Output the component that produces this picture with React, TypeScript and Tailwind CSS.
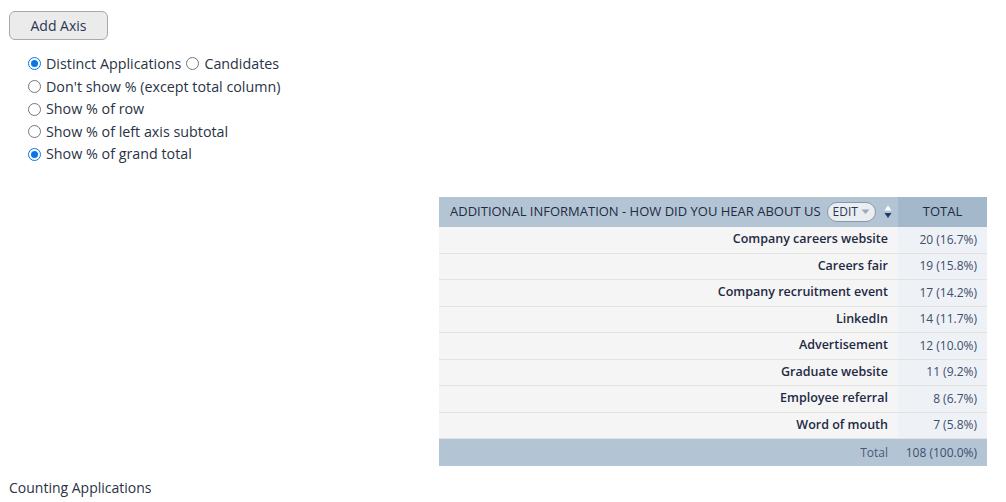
import React from "react";

const rows: [string, string][] = [
  ["Company careers website", "20 (16.7%)"],
  ["Careers fair", "19 (15.8%)"],
  ["Company recruitment event", "17 (14.2%)"],
  ["LinkedIn", "14 (11.7%)"],
  ["Advertisement", "12 (10.0%)"],
  ["Graduate website", "11 (9.2%)"],
  ["Employee referral", "8 (6.7%)"],
  ["Word of mouth", "7 (5.8%)"],
];

function Radio({ checked }: { checked?: boolean }) {
  return checked ? (
    <span className="inline-flex w-[13px] h-[13px] rounded-full border border-[#0a75e6] bg-white items-center justify-center shrink-0">
      <span className="w-[7px] h-[7px] rounded-full bg-[#0a75e6]" />
    </span>
  ) : (
    <span className="inline-block w-[13px] h-[13px] rounded-full border border-[#767676] bg-white shrink-0" />
  );
}

export default function App() {
  return (
    <div className="w-[1006px] h-[502px] bg-white text-[#1f2a44] font-['Open_Sans',sans-serif] text-[14px] relative">
      <div className="pt-[11px] pl-[9px]">
        <button className="w-[99px] h-[29px] rounded-[6px] border border-[#a9a9a9] bg-[#ebebeb] text-[14px] text-[#2a3754]">
          Add Axis
        </button>
      </div>
      <div className="pl-[28px] pt-[12px] flex flex-col text-[14.3px] text-[#2a3346]">
        <div className="h-[23px] flex items-center gap-[5px]">
          <Radio checked />
          <span>Distinct Applications</span>
          <Radio />
          <span>Candidates</span>
        </div>
        <div className="h-[23px] flex items-center gap-[5px]">
          <Radio />
          <span>Don't show % (except total column)</span>
        </div>
        <div className="h-[22px] flex items-center gap-[5px]">
          <Radio />
          <span>Show % of row</span>
        </div>
        <div className="h-[23px] flex items-center gap-[5px]">
          <Radio />
          <span>Show % of left axis subtotal</span>
        </div>
        <div className="h-[22px] flex items-center gap-[5px]">
          <Radio checked />
          <span>Show % of grand total</span>
        </div>
      </div>

      <div className="ml-[439px] mt-[32px] w-[548px] flex flex-col">
        <div className="flex h-[30px]">
          <div className="w-[459px] bg-[#b3c5d4] flex items-center pl-[11px] text-[13px] text-[#1f2a44]">
            <span>ADDITIONAL INFORMATION - HOW DID YOU HEAR ABOUT US</span>
            <span className="ml-[6px] h-[20px] px-[5px] rounded-full border border-[#8a96a6] bg-[#e9eef3] flex items-center gap-[3px] text-[12px] text-[#2a3754]">
              EDIT
              <svg width="9" height="6" viewBox="0 0 9 6"><path d="M0.5 0.5 L8.5 0.5 L4.5 5 Z" fill="#a0a8b4" /></svg>
            </span>
            <svg className="ml-[8px]" width="8" height="14" viewBox="0 0 8 14">
              <path d="M4 0.5 L7.5 5.5 L0.5 5.5 Z" fill="#ffffff" />
              <path d="M0.5 8 L7.5 8 L4 13 Z" fill="#1f3a66" />
            </svg>
          </div>
          <div className="flex-1 bg-[#a4b8cb] flex items-center justify-center text-[13px] text-[#1f2a44]">
            TOTAL
          </div>
        </div>
        {rows.map(([label, value]) => (
          <div key={label} className="flex h-[26.5px] border-b border-[#e2e2e2]">
            <div className="w-[459px] bg-[#f5f5f5] flex items-center justify-end pr-[10px] text-[12.5px] font-semibold text-[#1f2a44]">
              {label}
            </div>
            <div className="flex-1 bg-[#eef1f5] flex items-center justify-end pr-[10px] text-[12px] text-[#3d4e6e]">
              {value}
            </div>
          </div>
        ))}
        <div className="flex h-[27px] bg-[#b3c5d4] text-[12px]">
          <div className="w-[459px] flex items-center justify-end pr-[10px] text-[#4a5a78]">Total</div>
          <div className="flex-1 flex items-center justify-end pr-[10px] text-[#3d4e6e]">108 (100.0%)</div>
        </div>
      </div>

      <div className="pl-[9px] mt-[11px] text-[14px] text-[#2a3346]">Counting Applications</div>
    </div>
  );
}
